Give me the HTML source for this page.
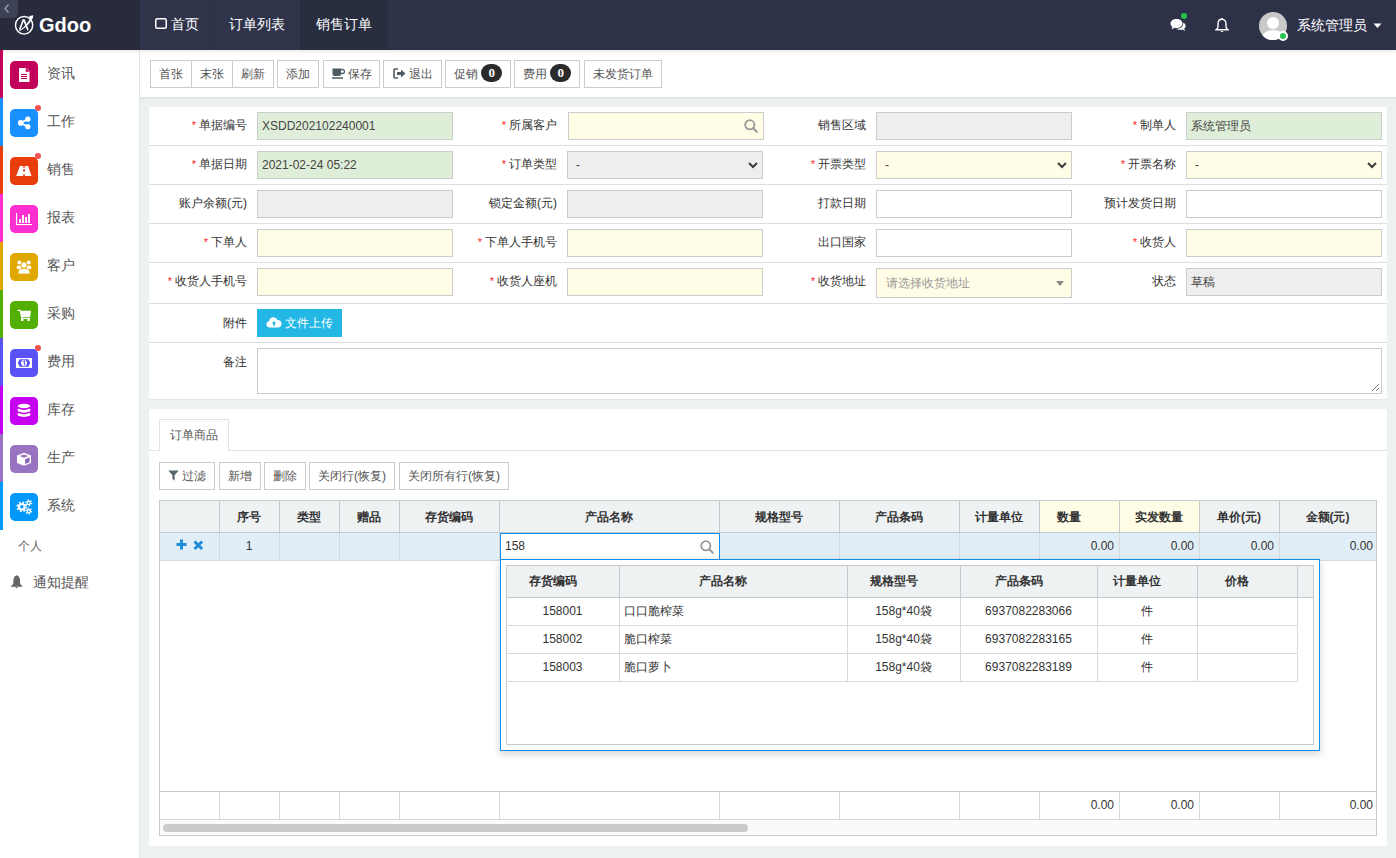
<!DOCTYPE html>
<html><head><meta charset="utf-8">
<style>
*{box-sizing:border-box;margin:0;padding:0}
html,body{width:1396px;height:858px;overflow:hidden}
body{background:#edf1f2;font-family:"Liberation Sans",sans-serif;font-size:12px;color:#333;position:relative}
.abs{position:absolute}
#hdr{left:0;top:0;width:1396px;height:50px;background:#2e3248;z-index:5;box-shadow:0 1px 4px rgba(0,0,0,0.12)}
#logo{left:0;top:0;width:140px;height:50px;background:#272b3c}
#collapse{left:0;top:0;width:18px;height:18px;background:#3d4155;border-bottom-right-radius:5px}
#logotxt{left:39px;top:13px;font-size:20px;font-weight:bold;color:#fff;line-height:24px}
.tab{top:0;height:50px;color:#fff;font-size:14px;line-height:48px;text-align:center}
#sb{left:0;top:50px;width:139px;height:808px;background:#fff;box-shadow:1px 0 3px rgba(0,0,0,0.05)}
.si{position:absolute;left:0;width:139px;height:48px}
.si .st{position:absolute;left:0;top:0;width:3px;height:48px}
.si .ic{position:absolute;left:10px;top:11px;width:28px;height:28px;border-radius:5px}
.si .ic svg{position:absolute;left:0;top:0}
.si .tx{position:absolute;left:47px;top:13px;font-size:14px;line-height:20px;color:#555}
.si .dot{position:absolute;left:34.5px;top:7px;width:6px;height:6px;border-radius:50%;background:#f05050}
#tb{left:140px;top:50px;width:1256px;height:48px;background:#fff;border-bottom:1px solid #dfe4e6;box-shadow:0 1px 2px rgba(0,0,0,0.05)}
.btn{position:absolute;top:10px;height:28px;border:1px solid #ccc;background:#fff;color:#555;font-size:12px;line-height:26px;text-align:center;white-space:nowrap}
.badge{display:inline-block;width:21px;height:18px;border-radius:9px;background:#2b2b2b;color:#fff;font-weight:bold;font-family:"Liberation Serif",serif;font-size:13px;line-height:18px;text-align:center;vertical-align:middle;margin-top:-3px}
#p1{left:149px;top:107px;width:1238px;height:293px;background:#fff;border-bottom:1px solid #e4e8ea}
.hl{position:absolute;left:0;width:1238px;height:1px;background:#dcdfe1}
.lbl{position:absolute;font-size:12px;line-height:16px;color:#333;text-align:right;white-space:nowrap}
.lbl i{font-style:normal;color:#f22;margin-right:3px;font-size:11px}
.inp{position:absolute;height:28px;border:1px solid #ccc;background:#fff;font-size:12px;line-height:26px;padding-left:4px;color:#444;white-space:nowrap}
.g{background:#dfeed8}
.y{background:#fffde6}
.d{background:#eee}
#p2{left:149px;top:409px;width:1238px;height:437px;background:#fff}

.th{position:absolute;top:0;height:32px;line-height:32px;text-align:center;font-weight:bold;font-size:12px;color:#333;white-space:nowrap}
.vl{position:absolute;width:1px;background:#d3d7da}
.num{position:absolute;text-align:right;font-size:12px;color:#333;white-space:nowrap}
</style></head><body>
<div id="hdr" class="abs">
  <div id="logo" class="abs"></div>
  <div id="collapse" class="abs"><svg width="18" height="18" style="position:absolute;left:0;top:0"><path d="M8.5 4.5 L5 8.5 L8.5 12.5" fill="none" stroke="#9aa0b4" stroke-width="1.3"/></svg></div>
  <svg class="abs" style="left:14px;top:14px" width="21" height="21" viewBox="0 0 21 21">
    <ellipse cx="10.1" cy="11.3" rx="8.6" ry="8.8" fill="none" stroke="#fff" stroke-width="1.4"/>
    <path d="M5.6 15.8 L9.6 5.2 M9.9 5.6 L14 16.3" fill="none" stroke="#fff" stroke-width="1.7"/>
    <path d="M2.2 18.8 C9 14.5 13.5 10 16.2 4.2 C15.5 3.5 15 3.2 14.5 3 C16 2 17.5 1.4 19.2 1.3 C19.3 3.5 18.5 5.5 17.3 6.5 C14.5 11.5 9.5 15.5 2.2 18.8Z" fill="#fff"/>
  </svg>
  <div id="logotxt" class="abs">Gdoo</div>
  <div class="abs tab" style="left:140px;width:74px;background:#30344b;border-right:1px solid #2a2e42;padding-left:1px"><svg width="12" height="11" style="vertical-align:0px;margin-right:4px"><rect x="0.75" y="0.75" width="10.5" height="9.5" rx="1.5" fill="none" stroke="#fff" stroke-width="1.5"/></svg>首页</div>
  <div class="abs tab" style="left:214px;width:86px;background:#30344b">订单列表</div>
  <div class="abs tab" style="left:300px;width:88px;background:#292d40">销售订单</div>
  <!-- chat -->
  <svg class="abs" style="left:1170px;top:18px" width="16" height="15" viewBox="0 0 16 15">
    <path d="M6.5 1 C10 1 12.5 3 12.5 5.5 C12.5 8 10 10 6.5 10 C5.8 10 5.2 9.9 4.6 9.8 L1.5 11.5 L2.4 9 C1.3 8.2 0.5 7 0.5 5.5 C0.5 3 3 1 6.5 1Z" fill="#fff"/>
    <path d="M13.3 4.5 C14.8 5.3 15.6 6.5 15.6 7.9 C15.6 9 15 10 14.2 10.6 L14.9 13 L12.2 11.6 C11.7 11.7 11.2 11.8 10.6 11.8 C8.6 11.8 7 11.1 6.1 10.9 C10.5 10.9 13.6 8.5 13.3 4.5Z" fill="#fff"/>
  </svg>
  <div class="abs" style="left:1181px;top:13px;width:6px;height:6px;border-radius:50%;background:#27c24c"></div>
  <!-- bell -->
  <svg class="abs" style="left:1215px;top:18px" width="14" height="15" viewBox="0 0 14 15">
    <path d="M7 1.2 C4.3 1.2 3 3.3 3 5.8 L3 8.8 C3 10 2.2 11 1 11.8 L13 11.8 C11.8 11 11 10 11 8.8 L11 5.8 C11 3.3 9.7 1.2 7 1.2Z" fill="none" stroke="#fff" stroke-width="1.4"/>
    <path d="M5.3 13 Q7 15.2 8.7 13Z" fill="#fff"/>
    <rect x="6.3" y="0" width="1.4" height="2" fill="#fff"/>
  </svg>
  <!-- avatar -->
  <div class="abs" style="left:1259px;top:12px;width:28px;height:28px;border-radius:50%;background:#c9c9c9;overflow:hidden">
    <div class="abs" style="left:8px;top:5px;width:12px;height:12px;border-radius:50%;background:#fff"></div>
    <div class="abs" style="left:3px;top:18px;width:22px;height:16px;border-radius:50%;background:#fff"></div>
  </div>
  <div class="abs" style="left:1278px;top:31px;width:10px;height:10px;border-radius:50%;background:#27c24c;border:2px solid #fff"></div>
  <div class="abs" style="left:1297px;top:15px;color:#fff;font-size:14px;line-height:20px">系统管理员</div>
  <svg class="abs" style="left:1373px;top:23px" width="9" height="6"><path d="M0.5 0.5 L8.5 0.5 L4.5 5Z" fill="#fff"/></svg>
</div>
<div id="sb" class="abs">
<div class="si" style="top:0px"><div class="st" style="background:#c2005a"></div><div class="ic" style="background:#c2005a"><svg width="28" height="28" viewBox="0 0 28 28"><path d="M9 7 L16.5 7 L19.5 10 L19.5 21 L9 21Z" fill="#fff"/><path d="M16 7 L16 10.5 L19.5 10.5" fill="#c2005a" stroke="#c2005a" stroke-width="0.6"/><rect x="11" y="13" width="6" height="1" fill="#c2005a"/><rect x="11" y="15" width="6" height="1" fill="#c2005a"/><rect x="11" y="17" width="6" height="1" fill="#c2005a"/></svg></div><div class="tx">资讯</div></div>
<div class="si" style="top:48px"><div class="st" style="background:#1890ff"></div><div class="ic" style="background:#1890ff"><svg width="28" height="28" viewBox="0 0 28 28"><circle cx="17.8" cy="10.2" r="2.6" fill="#fff"/><circle cx="17.8" cy="17.7" r="2.6" fill="#fff"/><circle cx="10.7" cy="13.9" r="2.8" fill="#fff"/><path d="M10.7 13.9 L17.8 10.2 M10.7 13.9 L17.8 17.7" stroke="#fff" stroke-width="1.8"/></svg></div><div class="dot"></div><div class="tx">工作</div></div>
<div class="si" style="top:96px"><div class="st" style="background:#e83e0b"></div><div class="ic" style="background:#e83e0b"><svg width="28" height="28" viewBox="0 0 28 28"><path d="M9.9 9 L18.1 9 L21.5 19 L6.2 19Z" fill="#fff"/><rect x="13.3" y="9" width="1.5" height="1.8" fill="#e83e0b"/><rect x="13.3" y="12" width="1.5" height="2.9" fill="#e83e0b"/><rect x="13.3" y="17.1" width="1.5" height="1.9" fill="#e83e0b"/></svg></div><div class="dot"></div><div class="tx">销售</div></div>
<div class="si" style="top:144px"><div class="st" style="background:#fd2fd0"></div><div class="ic" style="background:#fd2fd0"><svg width="28" height="28" viewBox="0 0 28 28"><rect x="6" y="8" width="1.2" height="12" fill="#fff"/><rect x="6" y="19" width="16" height="1.1" fill="#fff"/><rect x="9" y="14" width="2" height="4" fill="#fff"/><rect x="12" y="10" width="2" height="8" fill="#fff"/><rect x="15" y="12" width="2" height="6" fill="#fff"/><rect x="18" y="9" width="2" height="9" fill="#fff"/></svg></div><div class="tx">报表</div></div>
<div class="si" style="top:192px"><div class="st" style="background:#e0a800"></div><div class="ic" style="background:#e0a800"><svg width="28" height="28" viewBox="0 0 28 28"><circle cx="9.3" cy="9.4" r="2" fill="#fff"/><circle cx="18.7" cy="9.4" r="2" fill="#fff"/><ellipse cx="9" cy="14.4" rx="2.4" ry="1.9" fill="#fff"/><ellipse cx="19" cy="14.4" rx="2.4" ry="1.9" fill="#fff"/><circle cx="14" cy="12" r="3.1" fill="#fff" stroke="#e0a800" stroke-width="0.7"/><path d="M8.2 21 L8.2 19.2 Q8.2 15.4 14 15.4 Q19.8 15.4 19.8 19.2 L19.8 21Z" fill="#fff" stroke="#e0a800" stroke-width="0.7"/></svg></div><div class="tx">客户</div></div>
<div class="si" style="top:240px"><div class="st" style="background:#52ae00"></div><div class="ic" style="background:#52ae00"><svg width="28" height="28" viewBox="0 0 28 28"><path d="M7.3 9.3 L10.2 9.3 L11.9 17.3 L20 17.3" fill="none" stroke="#fff" stroke-width="1.3"/><path d="M10.4 9.8 L21 9.8 L20.2 16 L11.6 16Z" fill="#fff"/><rect x="11" y="18" width="2.4" height="2" fill="#fff"/><rect x="17.4" y="18" width="2.4" height="2" fill="#fff"/></svg></div><div class="tx">采购</div></div>
<div class="si" style="top:288px"><div class="st" style="background:#5a52f5"></div><div class="ic" style="background:#5a52f5"><svg width="28" height="28" viewBox="0 0 28 28"><rect x="6" y="9" width="16" height="10" fill="#fff"/><path d="M7.8 14 L9.6 10.2 L18.4 10.2 L20.2 14 L18.4 17.8 L9.6 17.8Z" fill="#5a52f5"/><circle cx="14" cy="14" r="2.9" fill="#fff"/><path d="M13.2 12.7 L14.4 12 L14.4 16.2" stroke="#5a52f5" stroke-width="1.1" fill="none"/></svg></div><div class="dot"></div><div class="tx">费用</div></div>
<div class="si" style="top:336px"><div class="st" style="background:#c600f0"></div><div class="ic" style="background:#c600f0"><svg width="28" height="28" viewBox="0 0 28 28"><ellipse cx="14" cy="9" rx="6.3" ry="2.2" fill="#fff"/><path d="M7.7 11.6 L7.7 14.3 Q14 17 20.3 14.3 L20.3 11.6 Q14 14.3 7.7 11.6Z" fill="#fff"/><path d="M7.7 15.8 L7.7 18.6 Q14 21.4 20.3 18.6 L20.3 15.8 Q14 18.5 7.7 15.8Z" fill="#fff"/></svg></div><div class="tx">库存</div></div>
<div class="si" style="top:384px"><div class="st" style="background:#9a72c2"></div><div class="ic" style="background:#9a72c2"><svg width="28" height="28" viewBox="0 0 28 28"><path d="M14 7.7 L21 10.4 L21 18.1 L14 20.8 L7 18.1 L7 10.4Z" fill="#fff"/><path d="M14 9.4 L18.4 11.1 L14 12.8 L9.6 11.1Z" fill="#9a72c2"/><path d="M15.1 14.2 L19.6 12.5 L19.6 17.2 L15.1 19Z" fill="#8d66bb"/></svg></div><div class="tx">生产</div></div>
<div class="si" style="top:432px"><div class="st" style="background:#0098fb"></div><div class="ic" style="background:#0098fb"><svg width="28" height="28" viewBox="0 0 28 28"><circle cx="11.8" cy="13.8" r="3.9" fill="#fff"/><circle cx="11.8" cy="13.8" r="4.6" fill="none" stroke="#fff" stroke-width="1.6" stroke-dasharray="1.8 1.81"/><circle cx="11.8" cy="13.8" r="1.7" fill="#0098fb"/><circle cx="18.7" cy="9.9" r="2.3" fill="#fff"/><circle cx="18.7" cy="9.9" r="2.9" fill="none" stroke="#fff" stroke-width="1.3" stroke-dasharray="1.3 1.74"/><circle cx="18.7" cy="9.9" r="0.9" fill="#0098fb"/><circle cx="18.7" cy="18.1" r="2.3" fill="#fff"/><circle cx="18.7" cy="18.1" r="2.9" fill="none" stroke="#fff" stroke-width="1.3" stroke-dasharray="1.3 1.74"/><circle cx="18.7" cy="18.1" r="0.9" fill="#0098fb"/></svg></div><div class="tx">系统</div></div>
<div class="abs" style="left:18px;top:488px;font-size:12px;line-height:16px;color:#666">个人</div>
<svg class="abs" style="left:10px;top:525px" width="14" height="14" viewBox="0 0 14 14"><path d="M6.7 0.2 C4.4 1 3.4 3 3.4 5.5 L3.3 8.3 C3.1 9.6 1.6 10.8 0.3 11.8 L13.1 11.8 C11.8 10.8 10.3 9.6 10.1 8.3 L10 5.5 C10 3 9 1 6.7 0.2Z" fill="#666"/><path d="M5.1 12.2 Q6.7 14.2 8.3 12.2Z" fill="#666"/></svg>
<div class="abs" style="left:33px;top:522px;font-size:14px;line-height:20px;color:#555">通知提醒</div>
</div>
<div id="tb" class="abs"></div>
<div class="btn" style="left:150px;top:60px;width:42px">首张</div>
<div class="btn" style="left:191px;top:60px;width:42px">末张</div>
<div class="btn" style="left:232px;top:60px;width:42px">刷新</div>
<div class="btn" style="left:277px;top:60px;width:42px">添加</div>
<div class="btn" style="left:323px;top:60px;width:57px"><svg width="13" height="11" style="vertical-align:-1px;margin-right:3px" viewBox="0 0 13 11"><path d="M0.5 0.5 L9 0.5 L9 6 Q9 8 7 8 L2.5 8 Q0.5 8 0.5 6Z" fill="#4f5b63"/><path d="M9 1.5 L10.5 1.5 Q12.5 1.5 12.5 3.5 Q12.5 5.5 10.5 5.5 L9 5.5" fill="none" stroke="#4f5b63" stroke-width="1.3"/><rect x="0" y="9.3" width="11" height="1.5" fill="#4f5b63"/></svg>保存</div>
<div class="btn" style="left:383px;top:60px;width:59px"><svg width="13" height="11" style="vertical-align:-1px;margin-right:3px" viewBox="0 0 13 11"><path d="M5 1 L2 1 Q1 1 1 2 L1 9 Q1 10 2 10 L5 10" fill="none" stroke="#4f5b63" stroke-width="1.6"/><path d="M4 4 L8 4 L8 1.5 L12.5 5.5 L8 9.5 L8 7 L4 7Z" fill="#4f5b63"/></svg>退出</div>
<div class="btn" style="left:445px;top:60px;width:66px">促销 <span class="badge">0</span></div>
<div class="btn" style="left:514px;top:60px;width:66px">费用 <span class="badge">0</span></div>
<div class="btn" style="left:584px;top:60px;width:78px">未发货订单</div>
<div id="p1" class="abs">
<div class="hl" style="top:38px"></div>
<div class="hl" style="top:77px"></div>
<div class="hl" style="top:116px"></div>
<div class="hl" style="top:155px"></div>
<div class="hl" style="top:196px"></div>
<div class="hl" style="top:235px"></div>
<div class="lbl" style="right:1140px;top:10px"><i>*</i>单据编号</div>
<div class="inp g" style="left:108px;top:5px;width:196px;">XSDD202102240001</div>
<div class="lbl" style="right:830px;top:10px"><i>*</i>所属客户</div>
<div class="inp y" style="left:419px;top:5px;width:196px;"><svg class="abs" style="right:5px;top:6px" width="14" height="14" viewBox="0 0 14 14"><circle cx="5.8" cy="5.8" r="4.6" fill="none" stroke="#999" stroke-width="1.8"/><path d="M9.2 9.2 L12.8 12.8" stroke="#999" stroke-width="2" stroke-linecap="round"/></svg></div>
<div class="lbl" style="right:521px;top:10px">销售区域</div>
<div class="inp d" style="left:727px;top:5px;width:196px;"></div>
<div class="lbl" style="right:211px;top:10px"><i>*</i>制单人</div>
<div class="inp g" style="left:1037px;top:5px;width:196px;">系统管理员</div>
<div class="lbl" style="right:1140px;top:49px"><i>*</i>单据日期</div>
<div class="inp g" style="left:108px;top:44px;width:196px;">2021-02-24 05:22</div>
<div class="lbl" style="right:830px;top:49px"><i>*</i>订单类型</div>
<div class="inp d" style="left:418px;top:44px;width:196px;padding-left:8px;">-<svg class="abs" style="right:4px;top:10px" width="10" height="7" viewBox="0 0 10 7"><path d="M1 1 L5 5 L9 1" fill="none" stroke="#3a3a3a" stroke-width="2"/></svg></div>
<div class="lbl" style="right:521px;top:49px"><i>*</i>开票类型</div>
<div class="inp y" style="left:727px;top:44px;width:196px;padding-left:8px;">-<svg class="abs" style="right:4px;top:10px" width="10" height="7" viewBox="0 0 10 7"><path d="M1 1 L5 5 L9 1" fill="none" stroke="#3a3a3a" stroke-width="2"/></svg></div>
<div class="lbl" style="right:211px;top:49px"><i>*</i>开票名称</div>
<div class="inp y" style="left:1037px;top:44px;width:196px;padding-left:8px;">-<svg class="abs" style="right:4px;top:10px" width="10" height="7" viewBox="0 0 10 7"><path d="M1 1 L5 5 L9 1" fill="none" stroke="#3a3a3a" stroke-width="2"/></svg></div>
<div class="lbl" style="right:1140px;top:88px">账户余额(元)</div>
<div class="inp d" style="left:108px;top:83px;width:196px;"></div>
<div class="lbl" style="right:830px;top:88px">锁定金额(元)</div>
<div class="inp d" style="left:418px;top:83px;width:196px;"></div>
<div class="lbl" style="right:521px;top:88px">打款日期</div>
<div class="inp " style="left:727px;top:83px;width:196px;"></div>
<div class="lbl" style="right:211px;top:88px">预计发货日期</div>
<div class="inp " style="left:1037px;top:83px;width:196px;"></div>
<div class="lbl" style="right:1140px;top:127px"><i>*</i>下单人</div>
<div class="inp y" style="left:108px;top:122px;width:196px;"></div>
<div class="lbl" style="right:830px;top:127px"><i>*</i>下单人手机号</div>
<div class="inp y" style="left:418px;top:122px;width:196px;"></div>
<div class="lbl" style="right:521px;top:127px">出口国家</div>
<div class="inp " style="left:727px;top:122px;width:196px;"></div>
<div class="lbl" style="right:211px;top:127px"><i>*</i>收货人</div>
<div class="inp y" style="left:1037px;top:122px;width:196px;"></div>
<div class="lbl" style="right:1140px;top:166px"><i>*</i>收货人手机号</div>
<div class="inp y" style="left:108px;top:161px;width:196px;"></div>
<div class="lbl" style="right:830px;top:166px"><i>*</i>收货人座机</div>
<div class="inp y" style="left:418px;top:161px;width:196px;"></div>
<div class="lbl" style="right:521px;top:166px"><i>*</i>收货地址</div>
<div class="inp y" style="left:727px;top:161px;width:196px;height:30px;line-height:29px;padding-left:9px;color:#999">请选择收货地址<svg class="abs" style="right:7px;top:12px" width="8" height="5" viewBox="0 0 8 5"><path d="M0 0 L8 0 L4 5Z" fill="#888"/></svg></div>
<div class="lbl" style="right:211px;top:166px">状态</div>
<div class="inp d" style="left:1037px;top:161px;width:196px;">草稿</div>
<div class="lbl" style="right:1140px;top:208px">附件</div>
<div class="abs" style="left:108px;top:202px;width:85px;height:28px;background:#23b7e5;color:#fff;font-size:12px;line-height:28px;padding-left:9px;white-space:nowrap"><svg width="16" height="12" viewBox="0 0 16 12" style="vertical-align:-1px;margin-right:3px"><path d="M4 11.5 Q0.5 11.5 0.5 8.3 Q0.5 5.6 3.2 5.2 Q3.5 1.5 7.3 1.2 Q10.3 1.2 11.3 4 Q15.5 4.2 15.5 7.8 Q15.5 11.5 12 11.5Z" fill="#fff"/><path d="M8 5 L10.3 7.5 L8.8 7.5 L8.8 10 L7.2 10 L7.2 7.5 L5.7 7.5Z" fill="#23b7e5"/></svg>文件上传</div>
<div class="lbl" style="right:1140px;top:247px">备注</div>
<div class="abs" style="left:108px;top:241px;width:1125px;height:46px;border:1px solid #ccc;background:#fff"><svg class="abs" style="right:1px;bottom:1px" width="9" height="9" viewBox="0 0 9 9"><path d="M1 8 L8 1 M5 8 L8 5" stroke="#777" stroke-width="1"/></svg></div>
</div>
<div id="p2" class="abs">
<div class="abs" style="left:0;top:41px;width:1238px;height:1px;background:#dee5e7"></div>
<div class="abs" style="left:10px;top:10px;width:70px;height:32px;background:#fff;border:1px solid #dee5e7;border-bottom:none;font-size:12px;line-height:30px;color:#555;text-align:center">订单商品</div>
<div class="btn" style="left:10px;top:53px;width:56px"><svg width="11" height="11" viewBox="0 0 11 11" style="vertical-align:-1px;margin-right:3px"><path d="M0.3 0.5 L10.7 0.5 L6.6 5.3 L6.6 10.8 L4.4 8.8 L4.4 5.3Z" fill="#58666e"/></svg>过滤</div>
<div class="btn" style="left:70px;top:53px;width:42px">新增</div>
<div class="btn" style="left:115px;top:53px;width:42px">删除</div>
<div class="btn" style="left:160px;top:53px;width:86px">关闭行(恢复)</div>
<div class="btn" style="left:250px;top:53px;width:110px">关闭所有行(恢复)</div>
<div class="abs" style="left:10px;top:91px;width:1218px;height:336px;border:1px solid #c4cacd;background:#fff"></div>
<div class="abs" style="left:11px;top:92px;width:1216px;height:31px;background:#eff2f3"></div>
<div class="abs" style="left:891px;top:92px;width:159px;height:31px;background:#fffde6"></div>
<div class="abs" style="left:11px;top:124px;width:1216px;height:27px;background:#e1edf7"></div>
<div class="abs" style="left:10px;top:123px;width:1218px;height:1px;background:#c4cacd"></div>
<div class="abs" style="left:10px;top:151px;width:1218px;height:1px;background:#d6dadd"></div>
<div class="abs" style="left:10px;top:382px;width:1218px;height:1px;background:#c4cacd"></div>
<div class="abs" style="left:10px;top:410px;width:1218px;height:1px;background:#d6dadd"></div>
<div class="abs" style="left:11px;top:411px;width:1216px;height:15px;background:#fafafa"></div>
<div class="abs" style="left:14px;top:415px;width:585px;height:8px;border-radius:4px;background:#cbcbcb"></div>
<div class="vl" style="left:70px;top:92px;height:31px;background:#c4cacd"></div>
<div class="vl" style="left:70px;top:124px;height:27px;background:#d6dadd"></div>
<div class="vl" style="left:70px;top:383px;height:27px;background:#d6dadd"></div>
<div class="vl" style="left:130px;top:92px;height:31px;background:#c4cacd"></div>
<div class="vl" style="left:130px;top:124px;height:27px;background:#d6dadd"></div>
<div class="vl" style="left:130px;top:383px;height:27px;background:#d6dadd"></div>
<div class="vl" style="left:190px;top:92px;height:31px;background:#c4cacd"></div>
<div class="vl" style="left:190px;top:124px;height:27px;background:#d6dadd"></div>
<div class="vl" style="left:190px;top:383px;height:27px;background:#d6dadd"></div>
<div class="vl" style="left:250px;top:92px;height:31px;background:#c4cacd"></div>
<div class="vl" style="left:250px;top:124px;height:27px;background:#d6dadd"></div>
<div class="vl" style="left:250px;top:383px;height:27px;background:#d6dadd"></div>
<div class="vl" style="left:350px;top:92px;height:31px;background:#c4cacd"></div>
<div class="vl" style="left:350px;top:124px;height:27px;background:#d6dadd"></div>
<div class="vl" style="left:350px;top:383px;height:27px;background:#d6dadd"></div>
<div class="vl" style="left:570px;top:92px;height:31px;background:#c4cacd"></div>
<div class="vl" style="left:570px;top:124px;height:27px;background:#d6dadd"></div>
<div class="vl" style="left:570px;top:383px;height:27px;background:#d6dadd"></div>
<div class="vl" style="left:690px;top:92px;height:31px;background:#c4cacd"></div>
<div class="vl" style="left:690px;top:124px;height:27px;background:#d6dadd"></div>
<div class="vl" style="left:690px;top:383px;height:27px;background:#d6dadd"></div>
<div class="vl" style="left:810px;top:92px;height:31px;background:#c4cacd"></div>
<div class="vl" style="left:810px;top:124px;height:27px;background:#d6dadd"></div>
<div class="vl" style="left:810px;top:383px;height:27px;background:#d6dadd"></div>
<div class="vl" style="left:890px;top:92px;height:31px;background:#c4cacd"></div>
<div class="vl" style="left:890px;top:124px;height:27px;background:#d6dadd"></div>
<div class="vl" style="left:890px;top:383px;height:27px;background:#d6dadd"></div>
<div class="vl" style="left:970px;top:92px;height:31px;background:#c4cacd"></div>
<div class="vl" style="left:970px;top:124px;height:27px;background:#d6dadd"></div>
<div class="vl" style="left:970px;top:383px;height:27px;background:#d6dadd"></div>
<div class="vl" style="left:1050px;top:92px;height:31px;background:#c4cacd"></div>
<div class="vl" style="left:1050px;top:124px;height:27px;background:#d6dadd"></div>
<div class="vl" style="left:1050px;top:383px;height:27px;background:#d6dadd"></div>
<div class="vl" style="left:1130px;top:92px;height:31px;background:#c4cacd"></div>
<div class="vl" style="left:1130px;top:124px;height:27px;background:#d6dadd"></div>
<div class="vl" style="left:1130px;top:383px;height:27px;background:#d6dadd"></div>
<div class="th" style="left:70px;top:93px;width:60px;height:31px;line-height:31px;">序号</div>
<div class="th" style="left:130px;top:93px;width:60px;height:31px;line-height:31px;">类型</div>
<div class="th" style="left:190px;top:93px;width:60px;height:31px;line-height:31px;">赠品</div>
<div class="th" style="left:250px;top:93px;width:100px;height:31px;line-height:31px;">存货编码</div>
<div class="th" style="left:350px;top:93px;width:220px;height:31px;line-height:31px;">产品名称</div>
<div class="th" style="left:570px;top:93px;width:120px;height:31px;line-height:31px;">规格型号</div>
<div class="th" style="left:690px;top:93px;width:120px;height:31px;line-height:31px;">产品条码</div>
<div class="th" style="left:810px;top:93px;width:80px;height:31px;line-height:31px;">计量单位</div>
<div class="th" style="left:890px;top:93px;width:80px;height:31px;line-height:31px;padding-right:20px;">数量</div>
<div class="th" style="left:970px;top:93px;width:80px;height:31px;line-height:31px;">实发数量</div>
<div class="th" style="left:1050px;top:93px;width:80px;height:31px;line-height:31px;">单价(元)</div>
<div class="th" style="left:1130px;top:93px;width:97px;height:31px;line-height:31px;">金额(元)</div>
<svg class="abs" style="left:27px;top:130px" width="28" height="12" viewBox="0 0 28 12"><path d="M4 0.5 L7 0.5 L7 4 L10.5 4 L10.5 7 L7 7 L7 10.5 L4 10.5 L4 7 L0.5 7 L0.5 4 L4 4Z" fill="#1c8ed8"/><path d="M17.5 3.5 L19.5 1.5 L22.3 4.3 L25.1 1.5 L27.1 3.5 L24.3 6.3 L27.1 9.1 L25.1 11.1 L22.3 8.3 L19.5 11.1 L17.5 9.1 L20.3 6.3Z" fill="#1c8ed8"/></svg>
<div class="num" style="left:70px;top:124px;width:60px;height:27px;line-height:27px;text-align:center">1</div>
<div class="num" style="left:890px;top:124px;width:75px;height:27px;line-height:27px">0.00</div>
<div class="num" style="left:970px;top:124px;width:75px;height:27px;line-height:27px">0.00</div>
<div class="num" style="left:1050px;top:124px;width:75px;height:27px;line-height:27px">0.00</div>
<div class="num" style="left:1130px;top:124px;width:94px;height:27px;line-height:27px">0.00</div>
<div class="num" style="left:890px;top:383px;width:75px;height:27px;line-height:27px">0.00</div>
<div class="num" style="left:970px;top:383px;width:75px;height:27px;line-height:27px">0.00</div>
<div class="num" style="left:1130px;top:383px;width:94px;height:27px;line-height:27px">0.00</div>
<div class="abs" style="left:351px;top:124px;width:220px;height:27px;border:1px solid #108ee9;background:#fff;font-size:12px;line-height:25px;padding-left:4px;color:#333">158<svg class="abs" style="right:5px;top:6px" width="14" height="14" viewBox="0 0 14 14"><circle cx="5.8" cy="5.8" r="4.6" fill="none" stroke="#999" stroke-width="1.8"/><path d="M9.2 9.2 L12.8 12.8" stroke="#999" stroke-width="2" stroke-linecap="round"/></svg></div>
<div class="abs" style="left:351px;top:150px;width:820px;height:192px;border:1px solid #108ee9;background:#fff;box-shadow:0 3px 8px rgba(0,0,0,0.18)">
<div class="abs" style="left:5px;top:5px;width:808px;height:180px;border:1px solid #c4cacd"></div>
<div class="abs" style="left:6px;top:6px;width:806px;height:31px;background:#eff2f3"></div>
<div class="abs" style="left:5px;top:37px;width:808px;height:1px;background:#c4cacd"></div>
<div class="vl" style="left:118px;top:6px;height:31px;background:#c4cacd"></div>
<div class="vl" style="left:118px;top:38px;height:83px;background:#d6dadd"></div>
<div class="vl" style="left:346px;top:6px;height:31px;background:#c4cacd"></div>
<div class="vl" style="left:346px;top:38px;height:83px;background:#d6dadd"></div>
<div class="vl" style="left:459px;top:6px;height:31px;background:#c4cacd"></div>
<div class="vl" style="left:459px;top:38px;height:83px;background:#d6dadd"></div>
<div class="vl" style="left:596px;top:6px;height:31px;background:#c4cacd"></div>
<div class="vl" style="left:596px;top:38px;height:83px;background:#d6dadd"></div>
<div class="vl" style="left:696px;top:6px;height:31px;background:#c4cacd"></div>
<div class="vl" style="left:696px;top:38px;height:83px;background:#d6dadd"></div>
<div class="vl" style="left:796px;top:6px;height:31px;background:#c4cacd"></div>
<div class="vl" style="left:796px;top:38px;height:83px;background:#d6dadd"></div>
<div class="abs" style="left:5px;top:65px;width:792px;height:1px;background:#d6dadd"></div>
<div class="abs" style="left:5px;top:93px;width:792px;height:1px;background:#d6dadd"></div>
<div class="abs" style="left:5px;top:121px;width:792px;height:1px;background:#d6dadd"></div>
<div class="th" style="padding-right:20px;left:5px;top:6px;width:113px;height:31px;line-height:31px">存货编码</div>
<div class="th" style="padding-right:20px;left:118px;top:6px;width:228px;height:31px;line-height:31px">产品名称</div>
<div class="th" style="padding-right:20px;left:346px;top:6px;width:113px;height:31px;line-height:31px">规格型号</div>
<div class="th" style="padding-right:20px;left:459px;top:6px;width:137px;height:31px;line-height:31px">产品条码</div>
<div class="th" style="padding-right:20px;left:596px;top:6px;width:100px;height:31px;line-height:31px">计量单位</div>
<div class="th" style="padding-right:20px;left:696px;top:6px;width:100px;height:31px;line-height:31px">价格</div>
<div class="num" style="left:5px;top:38px;width:113px;height:27px;line-height:27px;text-align:center">158001</div>
<div class="num" style="left:118px;top:38px;width:228px;height:27px;line-height:27px;text-align:left;padding-left:5px">口口脆榨菜</div>
<div class="num" style="left:346px;top:38px;width:113px;height:27px;line-height:27px;text-align:center">158g*40袋</div>
<div class="num" style="left:459px;top:38px;width:137px;height:27px;line-height:27px;text-align:center">6937082283066</div>
<div class="num" style="left:596px;top:38px;width:100px;height:27px;line-height:27px;text-align:center">件</div>
<div class="num" style="left:5px;top:66px;width:113px;height:27px;line-height:27px;text-align:center">158002</div>
<div class="num" style="left:118px;top:66px;width:228px;height:27px;line-height:27px;text-align:left;padding-left:5px">脆口榨菜</div>
<div class="num" style="left:346px;top:66px;width:113px;height:27px;line-height:27px;text-align:center">158g*40袋</div>
<div class="num" style="left:459px;top:66px;width:137px;height:27px;line-height:27px;text-align:center">6937082283165</div>
<div class="num" style="left:596px;top:66px;width:100px;height:27px;line-height:27px;text-align:center">件</div>
<div class="num" style="left:5px;top:94px;width:113px;height:27px;line-height:27px;text-align:center">158003</div>
<div class="num" style="left:118px;top:94px;width:228px;height:27px;line-height:27px;text-align:left;padding-left:5px">脆口萝卜</div>
<div class="num" style="left:346px;top:94px;width:113px;height:27px;line-height:27px;text-align:center">158g*40袋</div>
<div class="num" style="left:459px;top:94px;width:137px;height:27px;line-height:27px;text-align:center">6937082283189</div>
<div class="num" style="left:596px;top:94px;width:100px;height:27px;line-height:27px;text-align:center">件</div>
</div>
</div>
</body></html>
